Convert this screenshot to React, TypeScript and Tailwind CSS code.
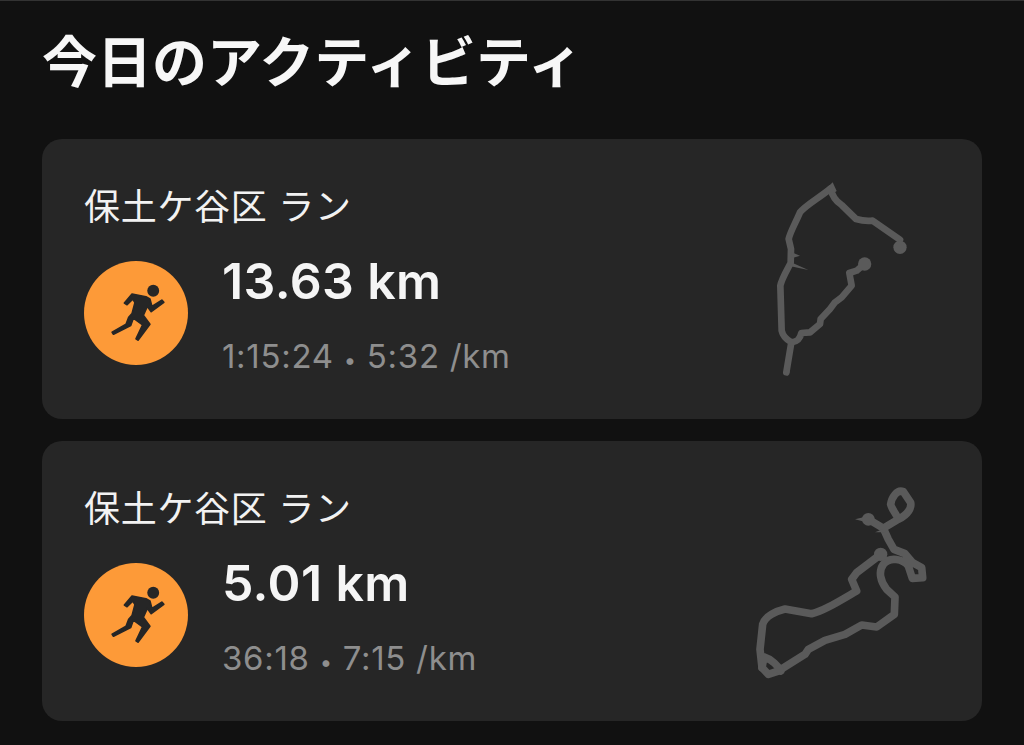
import React from 'react';

const route1 = [
  'M139 610 L154 520 M154 520 C140 512 128 500 125 485 L121 350 C125 330 140 305 152 282 L153 240 L146 210 C150 190 165 165 180 130 C195 110 240 85 272 58 C276 80 285 95 305 108 L348 150 Q375 158 398 155 L480 212',
  'M154 520 C170 518 180 512 184 492 L210 490 L240 465 L242 450 L270 420 L285 400 L305 385 L335 350 L328 312 L350 305 L373 285',
];
const route1Spikes = 'M150 278 L205 303 L152 292 Z M155 250 L180 260 L155 268 Z M278 40 L290 66 L270 80 L256 62 Z M133 605 L150 598 L148 612 L137 618 Z';

const route2 = [
  'M385 145 L430 172 L445 205 L462 235 L495 248 L518 275 L545 290 L548 320 L517 322 L505 285 C490 265 450 255 430 280 C415 300 420 330 440 355 L465 378 L463 430 L410 468 L365 462 L315 490 L255 508 L205 535 L195 550 L115 600 L85 610 L66 590 L60 535 L68 460 C75 435 110 420 135 414 L215 428 C250 420 290 395 350 360 L335 325 L350 305 L422 250',
  'M430 172 L475 145 C505 130 515 110 512 95 L490 62 C470 55 455 80 452 100 C455 115 470 130 475 145',
  'M66 590 L72 558 C95 565 115 585 122 600',
];
const route2Spikes = 'M345 145 L385 135 L385 155 Z M405 184 L435 172 L435 184 Z';

function RouteMap({ paths, spikes, dots, width }: { paths: string[]; spikes: string; dots: [number, number, number][]; width: number }) {
  return (
    <svg viewBox="0 0 600 660" className="w-[200px] h-[220px] shrink-0" fill="none">
      {paths.map(d => (
        <path key={d} d={d} stroke="#5a5a5a" strokeWidth={width} strokeLinejoin="round" strokeLinecap="round" />
      ))}
      <path d={spikes} fill="#5a5a5a" />
      {dots.map(([cx, cy, r]) => (
        <circle key={cx} cx={cx} cy={cy} r={r} fill="#5a5a5a" />
      ))}
    </svg>
  );
}

function RunnerBadge() {
  return (
    <svg viewBox="41 33 314 314" className="w-[104px] h-[104px] shrink-0">
      <circle cx="198" cy="190" r="157" fill="#fd9a38" />
      <circle cx="250" cy="123" r="18" fill="#262626" />
      <path
        d="M163 160 L186 133 L228 141 L240 148 L246 170 L276 151 L282 158 L244 186 L232 170 L220 197 L240 224 L204 272 L198 268 L218 226 L190 205 L182 228 L130 254 L126 248 L168 224 L176 203 L186 192 L195 158 L188 148 L171 165 Z"
        fill="#262626"
        stroke="#262626"
        strokeWidth="5"
        strokeLinejoin="round"
      />
    </svg>
  );
}

function ActivityCard({ distance, time, pace, route }: { distance: string; time: string; pace: string; route: React.ReactNode }) {
  return (
    <div className="h-[280px] rounded-[20px] bg-[#262626] pl-[42px] pr-[42px] flex items-center justify-between">
      <div className="flex flex-col">
        <p className="text-[36px] leading-[44px] text-[#f2f2f2] mt-[6px] tracking-[0.7px]">保土ケ谷区 ラン</p>
        <div className="flex items-center gap-[34px] mt-[18px]">
          <RunnerBadge />
          <div className="flex flex-col">
            <p className="text-[50px] leading-[56px] font-semibold text-[#f5f5f5] mt-[6px] tracking-[0.4px]">{distance}</p>
            <p className="text-[33px] leading-[40px] text-[#8e8e8e] mt-[27px] tracking-[0.7px]">
              {time}
              <span className="mx-[10px] text-[22px]">•</span>
              {pace}
            </p>
          </div>
        </div>
      </div>
      {route}
    </div>
  );
}

export default function App() {
  return (
    <div
      className="w-[1024px] h-[745px] overflow-hidden bg-[#111111] border-t border-[#333333] px-[42px]"
      style={{ fontFamily: 'Inter, "Noto Sans CJK JP", sans-serif' }}
    >
      <h1 className="text-[55px] leading-[64px] font-semibold text-[#f7f7f7] mt-[29px] mb-[45px]">今日のアクティビティ</h1>
      <div className="flex flex-col gap-[22px]">
        <ActivityCard
          distance="13.63 km"
          time="1:15:24"
          pace="5:32 /km"
          route={<RouteMap paths={route1} spikes={route1Spikes} width={20} dots={[[480, 235, 20], [374, 285, 20]]} />}
        />
        <ActivityCard
          distance="5.01 km"
          time="36:18"
          pace="7:15 /km"
          route={<RouteMap paths={route2} spikes={route2Spikes} width={23} dots={[[385, 145, 19], [422, 250, 20]]} />}
        />
      </div>
    </div>
  );
}
